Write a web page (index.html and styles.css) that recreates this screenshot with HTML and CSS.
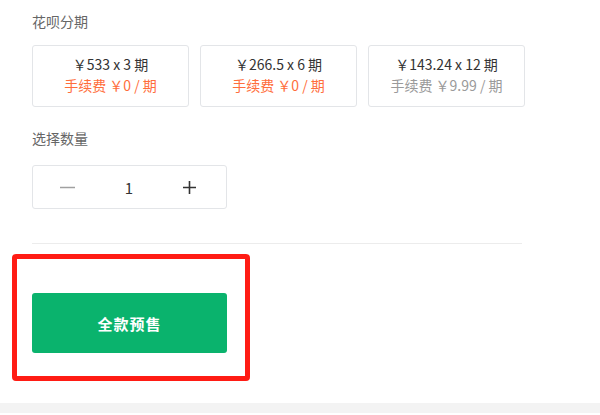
FILE: index.html
```html
<!DOCTYPE html>
<html lang="zh-CN">
<head>
    <meta charset="UTF-8">
    <meta name="viewport" content="width=device-width, initial-scale=1.0">
    <title>购买</title>
    <link rel="stylesheet" href="styles.css">
</head>
<body>
    <div class="buy-panel">
        <div class="field-label">花呗分期</div>
        <div class="stages">
            <div class="stage-card">
                <div class="stage-price">￥533 x 3 期</div>
                <div class="stage-fee free">手续费 ￥0 / 期</div>
            </div>
            <div class="stage-card">
                <div class="stage-price">￥266.5 x 6 期</div>
                <div class="stage-fee free">手续费 ￥0 / 期</div>
            </div>
            <div class="stage-card">
                <div class="stage-price">￥143.24 x 12 期</div>
                <div class="stage-fee">手续费 ￥9.99 / 期</div>
            </div>
        </div>

        <div class="field-label qty-label">选择数量</div>
        <div class="qty-box">
            <span class="qty-btn minus">
                <svg width="15" height="15" viewBox="0 0 15 15"><path d="M0 7.5h15" stroke="#a0a0a0" stroke-width="1.5"/></svg>
            </span>
            <span class="qty-num">1</span>
            <span class="qty-btn plus">
                <svg width="13" height="13" viewBox="0 0 13 13"><path d="M0 6.5h13M6.5 0v13" stroke="#333" stroke-width="1.6"/></svg>
            </span>
        </div>

        <div class="divider"></div>

        <button class="buy-btn">全款预售</button>
    </div>

    <!-- annotation frame around the button -->
    <div class="mark-box"></div>

    <div class="page-bottom"></div>
</body>
</html>
```

FILE: styles.css
```css
body {
    margin: 0;
    background-color: #fff;
    font-family: "Noto Sans CJK SC", "Noto Sans", sans-serif;
    color: #333;
    position: relative;
    height: 415px;
    overflow: hidden;
}

.buy-panel {
    padding: 11px 0 0 32px;
    width: 494px;
}

.field-label {
    font-size: 14px;
    line-height: 20px;
    color: #666;
}

.stages {
    display: flex;
    gap: 11px;
    margin-top: 14px;
}

.stage-card {
    width: 155px;
    border: 1px solid #e3e5e8;
    border-radius: 3px;
    padding: 8px 0 10px;
    text-align: center;
    font-size: 14px;
    line-height: 21px;
}

.stage-price {
    color: #333;
}

.stage-fee {
    color: #9a9a9a;
}

.stage-fee.free {
    color: #ff6e3c;
}

.qty-label {
    margin-top: 21px;
}

.qty-box {
    margin-top: 17px;
    width: 195px;
    height: 44px;
    border: 1px solid #e3e5e8;
    border-radius: 3px;
    display: flex;
    align-items: center;
    justify-content: space-between;
    padding: 0 30px 0 27px;
    box-sizing: border-box;
}

.qty-btn {
    display: flex;
    align-items: center;
}

.qty-num {
    font-size: 15px;
    color: #333;
}

.divider {
    margin-top: 34px;
    width: 490px;
    height: 1px;
    background-color: #ececec;
}

.buy-btn {
    display: block;
    margin-top: 49px;
    width: 195px;
    height: 60px;
    border: none;
    border-radius: 3px;
    background-color: #0ab36d;
    color: #fff;
    font-family: inherit;
    font-size: 15px;
    font-weight: bold;
    letter-spacing: 1px;
}

.mark-box {
    position: absolute;
    left: 12px;
    top: 254px;
    width: 228px;
    height: 117px;
    border: 5px solid #ff1c14;
    border-radius: 4px;
}

.page-bottom {
    position: absolute;
    left: 0;
    right: 0;
    top: 403px;
    height: 10px;
    background-color: #f3f3f3;
}
```
